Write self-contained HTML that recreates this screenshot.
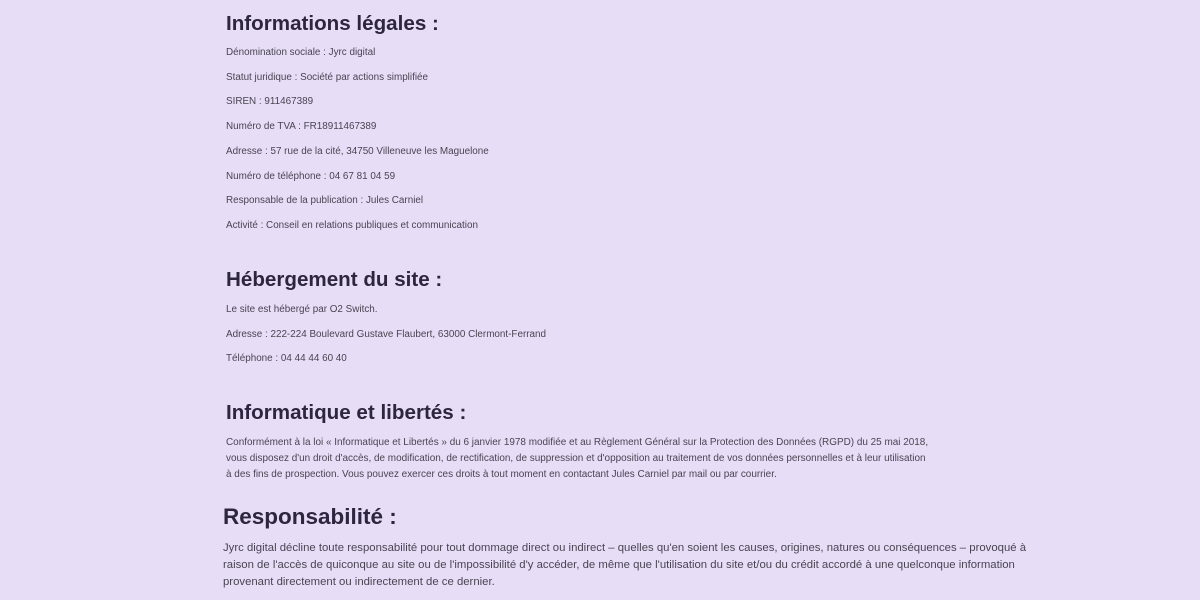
<!DOCTYPE html>
<html><head><meta charset="utf-8"><style>
body{margin:0;width:1200px;height:600px;background:#e7ddf6;overflow:hidden;font-family:"Liberation Sans",sans-serif;position:relative}
.h{position:absolute;left:226px;font-weight:bold;color:#2e2540;font-size:20.6px;line-height:24px;white-space:nowrap}
.t{position:absolute;left:226px;font-size:9.9px;color:#4a4452;line-height:12px;white-space:nowrap}
.p{position:absolute;left:226px;font-size:9.95px;color:#4a4452;line-height:16px;white-space:nowrap}
.q{position:absolute;left:223px;font-size:11.35px;color:#4a4452;line-height:17px;white-space:nowrap}
</style></head><body>
<div class="h" style="top:12px">Informations légales :</div>
<div class="t" style="top:47px">Dénomination sociale : Jyrc digital</div>
<div class="t" style="top:72px">Statut juridique : Société par actions simplifiée</div>
<div class="t" style="top:96px">SIREN : 911467389</div>
<div class="t" style="top:121px">Numéro de TVA : FR18911467389</div>
<div class="t" style="top:146px">Adresse : 57 rue de la cité, 34750 Villeneuve les Maguelone</div>
<div class="t" style="top:171px">Numéro de téléphone : 04 67 81 04 59</div>
<div class="t" style="top:195px">Responsable de la publication : Jules Carniel</div>
<div class="t" style="top:220px">Activité : Conseil en relations publiques et communication</div>
<div class="h" style="top:268px">Hébergement du site :</div>
<div class="t" style="top:304px">Le site est hébergé par O2 Switch.</div>
<div class="t" style="top:329px">Adresse : 222-224 Boulevard Gustave Flaubert, 63000 Clermont-Ferrand</div>
<div class="t" style="top:353px">Téléphone : 04 44 44 60 40</div>
<div class="h" style="top:401px">Informatique et libertés :</div>
<div class="p" style="top:435px">Conformément à la loi « Informatique et Libertés » du 6 janvier 1978 modifiée et au Règlement Général sur la Protection des Données (RGPD) du 25 mai 2018,<br>vous disposez d'un droit d'accès, de modification, de rectification, de suppression et d'opposition au traitement de vos données personnelles et à leur utilisation<br>à des fins de prospection. Vous pouvez exercer ces droits à tout moment en contactant Jules Carniel par mail ou par courrier.</div>
<div class="h" style="top:504px;left:223px;font-size:22.5px;line-height:26px">Responsabilité :</div>
<div class="q" style="top:540px">Jyrc digital décline toute responsabilité pour tout dommage direct ou indirect – quelles qu'en soient les causes, origines, natures ou conséquences – provoqué à<br>raison de l'accès de quiconque au site ou de l'impossibilité d'y accéder, de même que l'utilisation du site et/ou du crédit accordé à une quelconque information<br>provenant directement ou indirectement de ce dernier.</div>
</body></html>
